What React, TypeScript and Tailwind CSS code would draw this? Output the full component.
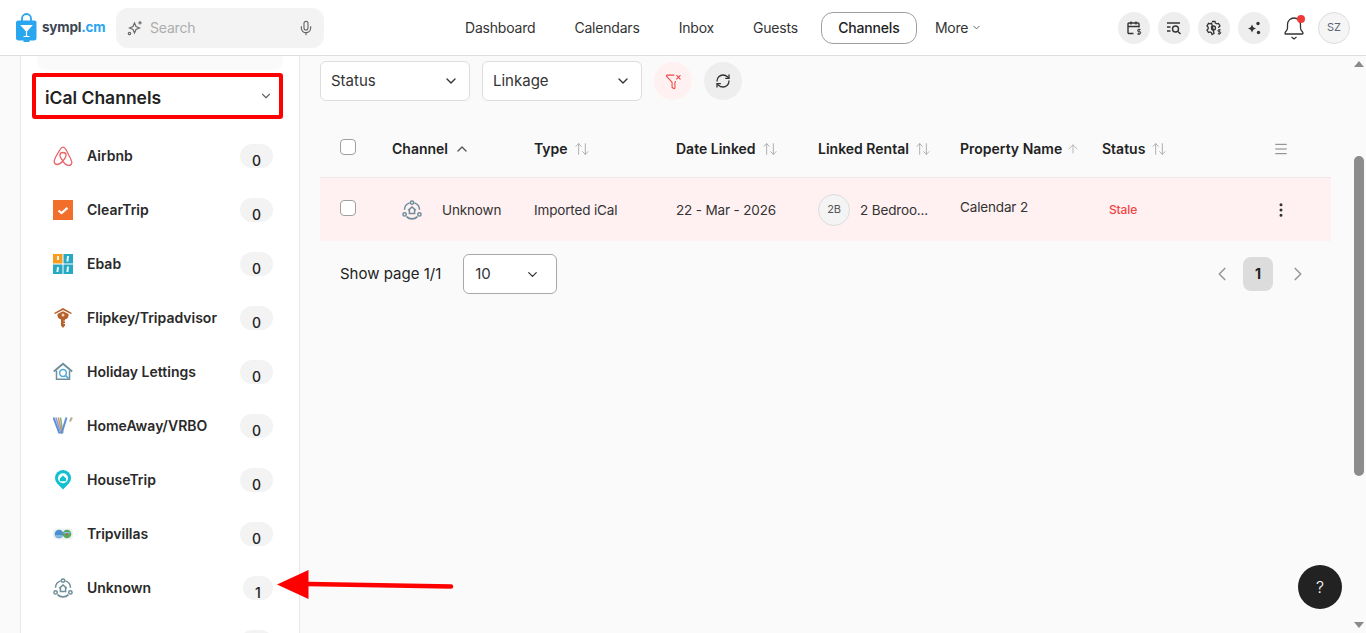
import React from 'react';
import {
  ArrowUp,
  ArrowUpDown,
  ChevronDown,
  ChevronLeft,
  ChevronRight,
  ChevronUp,
  EllipsisVertical,
  FunnelX,
  Menu,
  Mic,
  RefreshCw,
} from 'lucide-react';

const UnknownIcon = ({ size = 20 }: { size?: number }) => (
  <svg width={size} height={size} viewBox="0 0 20 20" fill="none" stroke="#6f8d9b" strokeWidth="1.500">
    <path d="M7.600 2.900A7.400 7.400 0 0 0 2.500 9.800" />
    <path d="M12.400 2.900a7.400 7.400 0 0 1 5.100 6.900" />
    <path d="M4.600 16.600a7.600 7.600 0 0 0 10.800 0" strokeWidth="1.900" />
    <circle cx="10" cy="2.600" r="1.700" />
    <circle cx="2.600" cy="14.400" r="1.700" />
    <circle cx="17.400" cy="14.400" r="1.700" />
    <path d="M6.200 10.400 10 7l3.800 3.400M7.400 9.800v3.600h5.200V9.800" />
  </svg>
);

const AirbnbIcon = () => (
  <svg width="20" height="20" viewBox="0 0 20 20" fill="none" stroke="#e8646a" strokeWidth="1.300">
    <path d="M10 14.800C8 12.400 6.900 10.600 6.900 9.200c0-1.700 1.300-2.700 3.100-2.700s3.100 1 3.100 2.700c0 1.400-1.100 3.200-3.100 5.600Zm0 0c-2 2.300-4 3.700-5.700 3.700-2 0-3.300-1.600-3.100-3.400.1-1.300 1-3.100 2.300-5.600L6.900 3.800C7.800 2.200 8.700 1.200 10 1.200s2.200 1 3.100 2.600l3.400 6.700c1.300 2.500 2.200 4.300 2.300 5.600.2 1.800-1.100 3.400-3.100 3.400-1.700 0-3.700-1.400-5.700-3.700Z" />
  </svg>
);

const ClearTripIcon = () => (
  <svg width="20" height="20" viewBox="0 0 20 20">
    <rect width="20" height="20" fill="#f26f2b" />
    <path d="M5.500 10.500 8.500 13 14.500 7.800" fill="none" stroke="#fff" strokeWidth="2.200" />
  </svg>
);

const EbabIcon = () => (
  <svg width="20" height="20" viewBox="0 0 20 20">
    <rect width="9.500" height="9.500" fill="#f99b1c" />
    <rect x="10.500" width="9.500" height="9.500" fill="#27a9c4" />
    <rect y="10.500" width="9.500" height="9.500" fill="#27a9c4" />
    <rect x="10.500" y="10.500" width="9.500" height="9.500" fill="#27a9c4" />
    <path d="M5 2v4M15 2l-.6 5.500M5 13l-.6 5M15 12.500l-.6 5.500" stroke="#e9f7fa" strokeWidth="2" />
  </svg>
);

const FlipkeyIcon = () => (
  <svg width="20" height="20" viewBox="0 0 20 20">
    <path d="M10 0 1.500 4.800v1.400L10 2l8.500 4.200V4.800Z" fill="#b5612b" />
    <path d="M4.500 6 10 3.300 15.500 6v1.500q0 2.800-3 3.800H7.500q-3-1-3-3.800Z" fill="#b5612b" />
    <circle cx="10" cy="7" r="1.500" fill="#f3d7bd" />
    <path d="M8 11h4v6.500L10 20l-2-2.500Z" fill="#b5612b" />
    <path d="M10.500 13h2M10.500 15.500h2" stroke="#fff" strokeWidth="0.800" />
  </svg>
);

const HolidayIcon = () => (
  <svg width="20" height="20" viewBox="0 0 20 20" fill="none">
    <path d="M.8 9.500 10 1.800l9.200 7.700" stroke="#6f8d9b" strokeWidth="1.900" />
    <path d="M3.500 8.500v8.700h13V8.500" stroke="#6f8d9b" strokeWidth="1.500" />
    <circle cx="10" cy="11" r="3.400" stroke="#4ba8d8" strokeWidth="1.500" />
    <path d="m12.500 13.500 3 3" stroke="#4ba8d8" strokeWidth="1.700" />
  </svg>
);

const VrboIcon = () => (
  <svg width="20" height="20" viewBox="0 0 20 20" fill="none">
    <path d="M.5 1.500 6.500 17.500" stroke="#5b8fd6" strokeWidth="2" />
    <path d="M2.800 1.500 8 17.500" stroke="#7a9fdc" strokeWidth="1.500" />
    <path d="M5.200 1.500 9 17.500" stroke="#e08a6a" strokeWidth="1.500" />
    <path d="M7.500 1.500 9.800 17" stroke="#7bb37a" strokeWidth="1.500" />
    <path d="M13.500 1.500 8.500 17.500" stroke="#5b8fd6" strokeWidth="2" />
    <path d="M19 1.500 16.800 5.500" stroke="#b8a99a" strokeWidth="2" />
  </svg>
);

const HouseTripIcon = () => (
  <svg width="20" height="20" viewBox="0 0 20 20">
    <path d="M10 19.500 4.200 13.500a8 8 0 1 1 11.600 0Z" fill="#12c0d0" />
    <circle cx="10" cy="8.300" r="5" fill="#fff" />
    <path d="M6.800 8.500 10 5.600l3.200 2.900v2.700H6.800Z" fill="#12c0d0" />
  </svg>
);

const TripvillasIcon = () => (
  <svg width="20" height="20" viewBox="0 0 20 20">
    <rect y="4.500" width="20" height="11" rx="4" fill="#eef1f1" />
    <circle cx="6" cy="10" r="4.300" fill="#4a90d0" />
    <circle cx="14" cy="10" r="4.300" fill="#5aa85a" />
    <path d="M2 11h8l-1.500 2.800h-5Z" fill="#7fb8e0" />
    <path d="M10.500 8h7l-1 1.500h-5Z" fill="#7fc0e8" />
    <rect x="13" y="9.500" width="2" height="1.500" fill="#c0563a" />
  </svg>
);

const channels = [
  { name: 'Airbnb', count: 0, icon: <AirbnbIcon /> },
  { name: 'ClearTrip', count: 0, icon: <ClearTripIcon /> },
  { name: 'Ebab', count: 0, icon: <EbabIcon /> },
  { name: 'Flipkey/Tripadvisor', count: 0, icon: <FlipkeyIcon /> },
  { name: 'Holiday Lettings', count: 0, icon: <HolidayIcon /> },
  { name: 'HomeAway/VRBO', count: 0, icon: <VrboIcon /> },
  { name: 'HouseTrip', count: 0, icon: <HouseTripIcon /> },
  { name: 'Tripvillas', count: 0, icon: <TripvillasIcon /> },
  { name: 'Unknown', count: 1, icon: <UnknownIcon /> },
];

const navItems = ['Dashboard', 'Calendars', 'Inbox', 'Guests'];

const columns = ['Type', 'Date Linked', 'Linked Rental'];

const HeaderCircle = ({ children }: { children: React.ReactNode }) => (
  <div className="w-8 h-8 rounded-full bg-[#eeeeee] flex items-center justify-center">{children}</div>
);

const App: React.FC = () => {
  return (
    <div className="relative h-[633px] overflow-hidden flex flex-col bg-[#fafafa] text-[#222222] font-['Inter',sans-serif]">
      {/* Top bar */}
      <header className="h-[56px] shrink-0 bg-white border-b border-[#dedede] flex items-center">
        <div className="w-[116px] pl-4 flex items-center gap-[5px]">
          <svg width="21" height="30" viewBox="0 0 21 30">
            <path d="M6 9V5.500a4.500 4.500 0 0 1 9 0V9" fill="none" stroke="#2aa5f0" strokeWidth="1.800" />
            <path d="M2.500 7.500h16q2 0 2 2V25q0 2.500-2.500 2.500h-4.500v1.500h-6v-1.500H3q-3 0-3-2.500V9.500q0-2 2.500-2Z" fill="#2aa5f0" />
            <path d="M5.500 12.500h10L10.500 18Zm5 5.500v5.500M7.500 23.500h6" fill="#fff" stroke="#fff" strokeWidth="1.200" />
          </svg>
          <span className="text-[13.500px] font-bold tracking-[-0.2px] text-[#3b4654]">
            sympl<span className="text-[#2aa5f0]">.cm</span>
          </span>
        </div>
        <div className="w-[208px] h-10 rounded-xl bg-[#f3f3f3] flex items-center pl-[11px] pr-[10px]">
          <svg width="16" height="16" viewBox="0 0 16 16" fill="none" stroke="#6a6a6a" strokeWidth="1.200">
            <path d="M7.500 3 9 6.500l3.500 1.500L9 9.500 7.500 13 6 9.500 2.500 8 6 6.500Z" />
            <path d="M13 1v3.500M11.300 2.800h3.400" />
            <circle cx="2.500" cy="13.500" r="1.200" />
          </svg>
          <span className="ml-[7px] text-sm tracking-[-0.2px] text-[#adadad] flex-1">Search</span>
          <Mic size={16} className="text-[#666666]" strokeWidth={1.700} />
        </div>
        <nav className="ml-[141px] flex items-center tracking-[-0.2px]">
          {navItems.map((item) => (
            <span key={item} className="text-sm text-[#333333] mr-[39px]">
              {item}
            </span>
          ))}
          <span className="-ml-4 w-[96px] h-8 rounded-xl border border-[#9f9f9f] flex items-center justify-center text-sm font-medium text-[#222222]">
            Channels
          </span>
          <span className="ml-[18px] text-sm text-[#333333]">More</span>
          <ChevronDown size={11} className="ml-[3px] text-[#555555]" />
        </nav>
        <div className="ml-auto mr-4 flex items-center gap-2">
          <HeaderCircle>
            <svg width="16" height="16" viewBox="0 0 16 16" fill="none" stroke="#333333" strokeWidth="1.400">
              <path d="M7.500 13.500H3a1 1 0 0 1-1-1V4a1 1 0 0 1 1-1h9a1 1 0 0 1 1 1v3.500M2 6.500h11M5 1.500v3M10 1.500v3" />
              <path d="M14.500 9.500h-2a1 1 0 0 0 0 2h1a1 1 0 0 1 0 2.500h-2.300M13 8.700v6.300" strokeWidth="1" />
            </svg>
          </HeaderCircle>
          <HeaderCircle>
            <svg width="16" height="16" viewBox="0 0 16 16" fill="none" stroke="#333333" strokeWidth="1.400">
              <path d="M1 3h13M1 7h3.500M1 11h3.500" />
              <circle cx="9.500" cy="9" r="3" />
              <path d="m12 11.500 2.500 2.500" />
            </svg>
          </HeaderCircle>
          <HeaderCircle>
            <svg width="16" height="16" viewBox="0 0 16 16" fill="none" stroke="#333333" strokeWidth="1.300">
              <path d="M6 1.500h3l.4 1.600 1.500.8 1.600-.5 1.500 2.500-1.200 1.200V8M8 13.500l-2 1-.4-1.600-1.500-.9-1.600.5L1 10l1.200-1.200v-1.600L1 6l1.500-2.600 1.600.5 1.500-.8Z" />
              <circle cx="7.500" cy="8" r="2" />
              <path d="M14.700 9.800h-1.800a.9.900 0 0 0 0 1.900h.8a1 1 0 0 1 0 2.100h-1.900M13.200 9v5.600" strokeWidth="1" />
            </svg>
          </HeaderCircle>
          <HeaderCircle>
            <svg width="16" height="16" viewBox="0 0 16 16" fill="#333333">
              <path d="M6 4.500 7.300 7.200 10 8.500 7.300 9.800 6 12.500 4.700 9.800 2 8.500l2.700-1.300Z" />
              <circle cx="12" cy="3.500" r="1.700" />
              <circle cx="12.500" cy="12.500" r="1.700" />
            </svg>
          </HeaderCircle>
          <div className="relative ml-[6px] w-[20px] h-[26px] flex items-center justify-center">
            <svg width="20" height="26" viewBox="0 0 20 26" fill="none" stroke="#333333" strokeWidth="1.300">
              <path d="M1 18.500q0-1.200 1-2.200 1.500-1.500 1.500-3.500V9.500a6.500 6.500 0 0 1 13 0v3.300q0 2 1.500 3.500 1 1 1 2.200 0 .5-.8.5H1.800q-.8 0-.8-.5Z" />
              <path d="m7.500 22 2.500 2 2.500-2" strokeWidth="1.200" />
            </svg>
            <span className="absolute top-0 right-[-1px] w-2 h-2 rounded-full bg-[#f03a3a]" />
          </div>
          <div className="ml-[6px] w-8 h-8 rounded-full bg-[#f5f5f5] border border-[#dddddd] flex items-center justify-center text-[11px] text-[#5c6470]">
            SZ
          </div>
        </div>
      </header>

      <div className="flex-1 min-h-0 flex">
        {/* Channel sidebar */}
        <aside className="ml-5 w-[280px] shrink-0 bg-white border-x border-[#e8e8e8] overflow-hidden">
          <div className="ml-4 mr-4 h-[14px] bg-[#fafafa] rounded-b-lg" />
          <div className="mt-[3px] ml-[11px] mr-4 h-[46px] border-4 border-[#ff0000] rounded-[3px] flex items-center pl-[9px] pr-[6px]">
            <span className="flex-1 pt-[5px] text-[17.500px] font-semibold text-[#222222]">iCal Channels</span>
            <ChevronDown size={14} className="text-[#666666]" />
          </div>
          <ul className="mt-[10px]">
            {channels.map((channel) => (
              <li key={channel.name} className="h-[54px] flex items-center pl-[32px] pr-[26px]">
                <span className="w-5 h-5 shrink-0 flex items-center justify-center">{channel.icon}</span>
                <span className="ml-[14px] flex-1 text-sm font-semibold text-[#2a2a2a]">{channel.name}</span>
                <span
                  className={`h-6 rounded-full bg-[#f3f3f3] flex items-center justify-center pt-[9px] text-sm font-medium text-[#222222] ${
                    channel.count ? 'w-[30px]' : 'w-[33px]'
                  }`}
                >
                  {channel.count}
                </span>
              </li>
            ))}
            <li className="h-[54px] flex items-center justify-end pr-[26px]">
              <span className="w-[33px] h-6 rounded-full bg-[#f3f3f3]" />
            </li>
          </ul>
        </aside>

        {/* Main content */}
        <main className="flex-1 min-w-0 pl-5 pr-[20px]">
          <div className="mt-[5px] flex items-center">
            <div className="w-[150px] h-10 rounded-md border border-[#dddddd] bg-white flex items-center px-[10px] text-[15px] text-[#333333]">
              <span className="flex-1">Status</span>
              <ChevronDown size={16} className="text-[#333333]" />
            </div>
            <div className="ml-3 w-[160px] h-10 rounded-md border border-[#dddddd] bg-white flex items-center px-[10px] text-[15px] text-[#333333]">
              <span className="flex-1">Linkage</span>
              <ChevronDown size={16} className="text-[#333333]" />
            </div>
            <div className="ml-3 w-[38px] h-[38px] rounded-full bg-[#fff1f1] flex items-center justify-center">
              <FunnelX size={17} strokeWidth={1.500} className="text-[#f04545]" />
            </div>
            <div className="ml-3 w-[38px] h-[38px] rounded-full bg-[#eeeeee] flex items-center justify-center">
              <RefreshCw size={16} strokeWidth={1.900} className="text-[#333333]" />
            </div>
          </div>

          {/* Table head */}
          <div className="mt-[19px] h-[58px] flex items-center border-b border-[#f0e8e8] pl-5 text-sm font-semibold text-[#222222]">
            <span className="w-[52px] shrink-0">
              <span className="block w-4 h-4 rounded-[4px] border border-[#a0a0a0] bg-white -mt-[3px]" />
            </span>
            <span className="w-[142px] shrink-0 flex items-center">
              Channel
              <ChevronUp size={16} className="ml-[6px] text-[#555555]" />
            </span>
            {columns.map((col) => (
              <span key={col} className="w-[142px] shrink-0 flex items-center">
                {col}
                <ArrowUpDown size={16} strokeWidth={1.400} className="ml-[6px] text-[#aaaaaa]" />
              </span>
            ))}
            <span className="w-[142px] shrink-0 flex items-center whitespace-nowrap">
              Property Name
              <ArrowUp size={14} strokeWidth={1.400} className="ml-[4px] text-[#aaaaaa]" />
            </span>
            <span className="w-[171px] shrink-0 flex items-center">
              Status
              <ArrowUpDown size={16} strokeWidth={1.400} className="ml-[6px] text-[#aaaaaa]" />
            </span>
            <Menu size={16} strokeWidth={1.400} className="text-[#777777]" />
          </div>

          {/* Table row */}
          <div className="h-[63px] flex items-center bg-[#fff1f1] pl-5 text-[13.500px] tracking-[-0.15px] text-[#333333]">
            <span className="w-[52px] shrink-0">
              <span className="block w-4 h-4 rounded-[4px] border border-[#a0a0a0] bg-white -mt-[3px]" />
            </span>
            <span className="w-[142px] shrink-0 flex items-center pl-[10px]">
              <UnknownIcon />
              <span className="ml-[20px] pt-px">Unknown</span>
            </span>
            <span className="w-[142px] shrink-0 pt-px">Imported iCal</span>
            <span className="w-[142px] shrink-0 pt-px">22 - Mar - 2026</span>
            <span className="w-[142px] shrink-0 flex items-center">
              <span className="w-8 h-8 rounded-full bg-[#f4f4f4] border border-[#dddddd] flex items-center justify-center text-[11px] text-[#555555]">
                2B
              </span>
              <span className="ml-[10px] pt-px">2 Bedroo...</span>
            </span>
            <span className="w-[142px] shrink-0 -mt-[5px]">Calendar 2</span>
            <span className="w-[171px] shrink-0 pl-[7px] text-xs font-medium text-[#f04545]">Stale</span>
            <EllipsisVertical size={18} className="-ml-[1px] text-[#333333]" />
          </div>

          {/* Pagination */}
          <div className="mt-[13px] flex items-center pl-5 pr-[22px]">
            <span className="text-[15px] text-[#222222]">Show page 1/1</span>
            <div className="ml-[22px] w-[94px] h-10 rounded-md border border-[#a8a8a8] bg-white flex items-center pl-[11px] pr-[16px] text-[15px] text-[#333333]">
              <span className="flex-1">10</span>
              <ChevronDown size={15} className="text-[#333333]" />
            </div>
            <ChevronLeft size={22} strokeWidth={1.800} className="ml-auto text-[#999999]" />
            <span className="ml-[10px] w-[30px] h-[34px] rounded-lg bg-[#dcdcdc] flex items-center justify-center text-sm font-bold text-[#222222]">
              1
            </span>
            <ChevronRight size={22} strokeWidth={1.800} className="ml-[14px] text-[#999999]" />
          </div>
        </main>

        {/* Page scrollbar */}
        <div className="w-[15px] shrink-0 flex flex-col items-center pt-[5px] pb-[5px]">
          <span className="w-0 h-0 border-x-[5px] border-x-transparent border-b-[6px] border-b-[#8a8a8a]" />
          <span className="mt-[89px] w-[10px] h-[320px] rounded-full bg-[#8c8c8c]" />
          <span className="mt-auto w-0 h-0 border-x-[5px] border-x-transparent border-t-[6px] border-t-[#8a8a8a]" />
        </div>
      </div>

      {/* Annotation arrow */}
      <svg className="absolute left-[270px] top-[565px]" width="190" height="40" viewBox="0 0 190 40">
        <path d="M38 19 181 21.500" stroke="#ff0000" strokeWidth="4.500" strokeLinecap="round" />
        <path d="M7 19.500 38.500 5v29Z" fill="#ff0000" />
      </svg>

      {/* Help button */}
      <div className="absolute left-[1298px] top-[565px] w-11 h-11 rounded-full bg-[#222222] flex items-center justify-center text-base font-light text-white">
        ?
      </div>
    </div>
  );
};

export default App;
